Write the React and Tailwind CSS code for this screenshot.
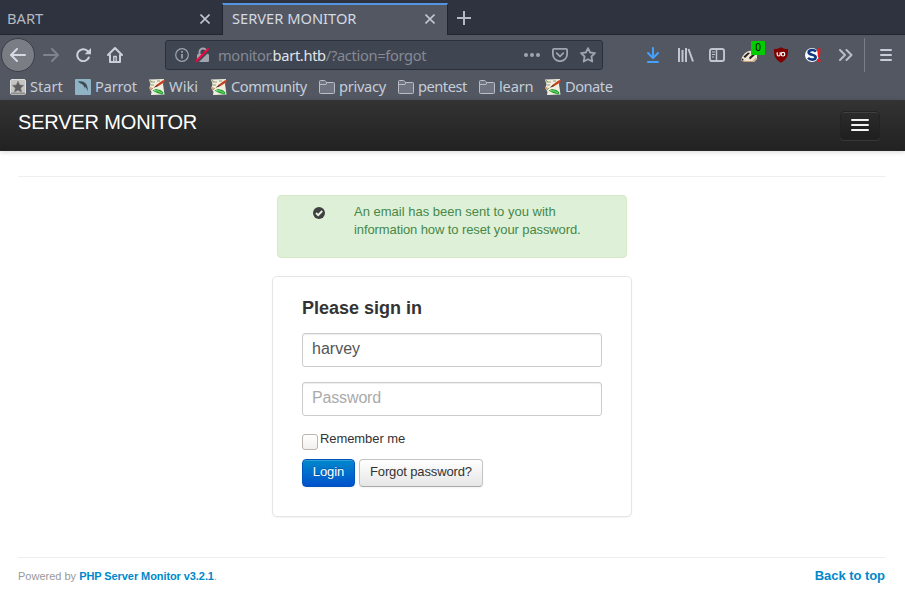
import React from "react";

const StartIcon = () => (
  <svg width="16" height="16" viewBox="0 0 16 16">
    <rect x=".5" y=".5" width="15" height="15" rx="1.5" fill="#c4c4c2" stroke="#dededc" />
    <rect x="1" y="13.5" width="14" height="2" fill="#8c8c8a" />
    <path d="M8 2.2l1.7 3.7 4 .5-3 2.7.8 4L8 11.2l-3.5 1.9.8-4-3-2.7 4-.5z" fill="#5c5c5c" stroke="#777" strokeWidth=".6" />
  </svg>
);

const ParrotIcon = () => (
  <svg width="16" height="16" viewBox="0 0 16 16">
    <rect width="16" height="16" rx="1" fill="#8fb3c4" />
    <path d="M3 2.500c3-.8 6-.2 8 2.200c1.600 2 1.600 4.800 2 7.300c-1.300-1.500-1.800-3.400-2.900-4.800c.2.9.1 1.800-.2 2.600c-.4-2-1.200-3.400-2.700-4.500c-1.300-.8-2.700-1.200-4.200-2.800z" fill="#3c4a56" />
  </svg>
);

const NoteIcon = () => (
  <svg width="16" height="16" viewBox="0 0 16 16">
    <path d="M0 .5L15 0l-1 5 1.500 10.500L2 16l.5-3L.5 9l1-3.500z" fill="#f1eee0" />
    <path d="M1 3h5M2 6h3M1 1l2 2M2 11l2-2M8 2h3" stroke="#8f9f72" strokeWidth="1" />
    <path d="M0 7.500l3.500 1.500L1 11z" fill="#d99b6c" />
    <path d="M5 8.500l3-3 5.500-4 2.500-.5-1 2.500-5.500 3.500z" fill="#c5401f" />
    <path d="M4.500 9l3.500-3 1 1z" fill="#49302a" />
    <path d="M3.500 11.500l3.500-1.500 4.500 1 3 2.500-1 2-5.500-1.500z" fill="#20a02d" />
    <path d="M5 11.500l4 .5 4 2" stroke="#8be28a" strokeWidth=".9" fill="none" />
  </svg>
);

const FolderIcon = () => (
  <svg width="16" height="16" viewBox="0 0 16 16" fill="#6f7480" stroke="#b9bdc6" strokeLinejoin="round">
    <path d="M.5 13.500v-11q0-1 1-1h4q.8 0 1.200.8l.6 1.200h7.200q1 0 1 1v9q0 1-1 1h-13q-1 0-1-1z" />
    <path d="M1 5.500h6l1-2" fill="none" />
  </svg>
);

const bookmarks = [
  { label: "Start", Icon: StartIcon, box: "w-[65px]", text: "" },
  { label: "Parrot", Icon: ParrotIcon, box: "w-[74px]", text: "tracking-[-0.2px]" },
  { label: "Wiki", Icon: NoteIcon, box: "w-[62px]", text: "" },
  { label: "Community", Icon: NoteIcon, box: "w-[108px]", text: "tracking-[-0.5px]" },
  { label: "privacy", Icon: FolderIcon, box: "w-[79px]", text: "tracking-[-0.3px]" },
  { label: "pentest", Icon: FolderIcon, box: "w-[81px]", text: "tracking-[-0.5px]" },
  { label: "learn", Icon: FolderIcon, box: "w-[66px]", text: "tracking-[-0.2px]" },
  { label: "Donate", Icon: NoteIcon, box: "w-[80px]", text: "tracking-[-0.5px]" },
];

const Cross = () => (
  <svg width="10" height="10" viewBox="0 0 10 10" stroke="#c0c5cf" strokeWidth="1.6">
    <path d="M.5.500l9 9M9.500.500l-9 9" />
  </svg>
);

function TabBar() {
  return (
    <div className="flex h-[35px] border-b border-[#22252f] bg-[#2f333f] text-[14.667px] leading-[20px]">
      <div className="flex w-[222px] items-center pt-[3px] pl-[7px] text-[#b4b9c3]">
        <span className="w-[193px] pb-[2px]">BART</span>
        <Cross />
      </div>
      <div className="mt-[3px] flex h-[32px] w-[226px] items-center border-x border-t-2 border-x-[#22252f] border-t-[#5294e2] bg-[#535762] pb-[2px] pl-[9px] text-[#d3dae3]">
        <span className="w-[193px] pb-[2px] whitespace-nowrap">SERVER MONITOR</span>
        <Cross />
      </div>
      <svg className="mt-[11px] ml-[9px]" width="14" height="14" viewBox="0 0 14 14" stroke="#b4b9c3" strokeWidth="2">
        <path d="M7 0v14M0 7h14" />
      </svg>
    </div>
  );
}

function UrlBar() {
  return (
    <div className="ml-[42px] flex h-[30px] w-[438px] items-center rounded-[3px] border border-[#2c303b] bg-[#404552] pl-[9px]">
      <svg width="14" height="14" viewBox="0 0 14 14" fill="none" stroke="#a0a5af">
        <circle cx="7" cy="7" r="6.300" strokeWidth="1.200" />
        <path d="M7 6v4.500M7 3v1.700" strokeWidth="1.700" />
      </svg>
      <svg className="ml-[6px]" width="15" height="16" viewBox="0 0 15 16" fill="none">
        <path d="M4.500 8V5a3.500 3.500 0 0 1 7 0v3" stroke="#a0a5af" strokeWidth="1.900" />
        <rect x="2" y="7" width="12" height="8" rx="1.200" fill="#a0a5af" />
        <path d="M2 15.500L15 2.500" stroke="#404552" strokeWidth="2" />
        <path d="M.8 14.500L13.600 1.500" stroke="#f5053c" strokeWidth="1.900" />
      </svg>
      <span className="ml-[8px] w-[306px] text-[14.667px] leading-[20px] tracking-[-0.33px] whitespace-nowrap text-[#858a95]">
        monitor.<span className="text-[#e1e5eb]">bart.htb</span>/?action=forgot
      </span>
      <svg width="16" height="4" viewBox="0 0 16 4" fill="#a0a5af">
        <circle cx="2" cy="2" r="2" /><circle cx="8" cy="2" r="2" /><circle cx="14" cy="2" r="2" />
      </svg>
      <svg className="ml-[12px]" width="16" height="14" viewBox="0 0 16 14" fill="none" stroke="#a0a5af" strokeWidth="1.800" strokeLinecap="round" strokeLinejoin="round">
        <path d="M2 .9h12q1.100 0 1.100 1.100v4.200a7.100 7 0 0 1-14.200 0V2q0-1.100 1.100-1.100z" />
        <path d="M4.700 5.200L8 8.300l3.300-3.100" />
      </svg>
      <svg className="ml-[12px]" width="16" height="16" viewBox="0 0 16 16" fill="none" stroke="#a0a5af" strokeWidth="1.800" strokeLinejoin="round">
        <path d="M8 1.100l2.100 4.400 4.900.7-3.600 3.300.9 5L8 12.200l-4.300 2.300.9-5L1 6.200l4.900-.7z" />
      </svg>
    </div>
  );
}

function Toolbar() {
  return (
    <div className="flex h-[40px] items-center pl-px">
      <div className="flex h-[34px] w-[34px] items-center justify-center rounded-full border border-[#3b3e48] bg-[#7b7d84]">
        <svg width="16" height="14" viewBox="0 0 16 14" fill="none" stroke="#d3dae3" strokeWidth="2" strokeLinecap="round" strokeLinejoin="round">
          <path d="M15 7H1.500M7 1L1 7l6 6" />
        </svg>
      </div>
      <svg className="ml-[8px]" width="16" height="14" viewBox="0 0 16 14" fill="none" stroke="#7e838e" strokeWidth="2" strokeLinecap="round" strokeLinejoin="round">
        <path d="M1 7h13.500M9 1l6 6-6 6" />
      </svg>
      <svg className="ml-[17px]" width="15" height="14" viewBox="0 0 15 14" fill="none" stroke="#cbd0da" strokeWidth="2" strokeLinecap="round">
        <path d="M12.800 9.500A6 6 0 1 1 11.300 2.700l1.700 1.700" />
        <path d="M15 0v6.200H8.700z" fill="#cbd0da" stroke="none" />
      </svg>
      <svg className="ml-[16px]" width="16" height="16" viewBox="0 0 16 16" fill="none" stroke="#cbd0da" strokeWidth="2" strokeLinecap="round" strokeLinejoin="round">
        <path d="M1 8l7-7 7 7M3 8v7h10V8" />
        <path d="M6.800 14V9.500h2.400V14" strokeWidth="1.400" />
      </svg>
      <UrlBar />
      <svg className="ml-[43px]" width="14" height="16" viewBox="0 0 14 16" fill="none" stroke="#45a1ff" strokeWidth="2" strokeLinejoin="round">
        <path d="M7 1v9.500M2 6l5 5 5-5M2 15h10" strokeLinecap="round" />
      </svg>
      <svg className="ml-[18px]" width="16" height="14" viewBox="0 0 16 14" stroke="#c0c5cf" strokeWidth="2">
        <path d="M1 0v14M4.500 2v12M8 0v14M10.500 1l4.500 12.500" />
      </svg>
      <svg className="ml-[15px]" width="16" height="14" viewBox="0 0 16 14" fill="none" stroke="#c0c5cf" strokeWidth="1.900">
        <rect x=".95" y=".95" width="14.100" height="12.100" rx="2" />
        <path d="M7.500 1v12" strokeWidth="1.500" /><path d="M3 4h3M3 6.500h3M3 9h2" strokeWidth="1" />
      </svg>
      <div className="relative ml-[16px] h-[16px] w-[16px]">
        <svg width="16" height="16" viewBox="0 0 16 16">
          <path d="M0 13c1-4 4-8 8-9l5-.5 3 4.500v4l-3 3H4z" fill="#eee5d6" />
          <path d="M2.500 9.500l4.500-4 2 .5-5 5zM8 10.500l4-3.500 2 1-5 4.500z" fill="#262320" />
          <path d="M0 13l4 1.500h8l3.500-3.500" stroke="#c89f71" strokeWidth="1.200" fill="none" />
          <circle cx="1.500" cy="12.500" r="1" fill="#332821" />
        </svg>
        <span className="absolute top-[-6px] left-[10px] h-[14px] w-[14px] rounded-[1px] bg-[#00cc00] text-center text-[10px] leading-[13px] text-black">0</span>
      </div>
      <svg className="ml-[16px]" width="16" height="16" viewBox="0 0 16 16">
        <path d="M8 .3C6 1.700 3.500 2 1 2c0 6 0 9.500 7 13.700C15 11.500 15 8 15 2c-2.500 0-5-.3-7-1.700z" fill="#800000" />
        <path d="M4.200 5.300v2.200q0 1.500 1.500 1.500t1.500-1.500V5.300" fill="none" stroke="#fff" strokeWidth="1.200" />
        <circle cx="10" cy="7.200" r="1.800" fill="none" stroke="#fff" strokeWidth="1.200" />
      </svg>
      <svg className="ml-[16px]" width="16" height="16" viewBox="0 0 16 16">
        <circle cx="7" cy="8" r="7" fill="#fff" />
        <path d="M11 4.700C9 2.200 3.500 2.500 3.700 5.500 4 8.500 10.600 7 10.600 10.300c0 3-5.600 2.900-7.600.6" fill="none" stroke="#123a82" strokeWidth="2.700" />
        <path d="M12.200 1.500h3.300l-.6 9h-2z" fill="#f21818" /><rect x="12.400" y="12" width="3" height="3" fill="#f21818" />
      </svg>
      <svg className="ml-[18px]" width="14" height="12" viewBox="0 0 14 12" fill="none" stroke="#b9bdca" strokeWidth="2" strokeLinecap="round" strokeLinejoin="round">
        <path d="M1 1l5 5-5 5M7.500 1l5 5-5 5" />
      </svg>
      <div className="ml-[11px] h-[34px] w-px bg-[#7b7e88]" />
      <div className="ml-[15px] flex w-[12px] flex-col gap-[3px]">
        <i className="h-[2px] rounded-sm bg-[#c8cbd8]" /><i className="h-[2px] rounded-sm bg-[#c8cbd8]" /><i className="h-[2px] rounded-sm bg-[#c8cbd8]" />
      </div>
    </div>
  );
}

function Browser() {
  return (
    <div className="font-['Noto_Sans',sans-serif]">
      <TabBar />
      <div className="h-[65px] bg-[#535762]">
        <Toolbar />
        <div className="flex h-[25px] items-center pb-px pl-[10px]">
          {bookmarks.map(({ label, Icon, box, text }) => (
            <div key={label} className={`flex items-center gap-[4px] ${box}`}>
              <Icon />
              <span className={`pb-[2px] text-[14.667px] leading-[20px] whitespace-nowrap text-[#c5cdd9] ${text}`}>{label}</span>
            </div>
          ))}
        </div>
      </div>
    </div>
  );
}

function SiteHeader() {
  return (
    <div className="flex h-[51px] justify-between border-b border-[#252525] bg-linear-to-b from-[#333] to-[#222] pr-[25px] pl-[18px] shadow-[0_1px_5px_rgba(0,0,0,0.17)]">
      <div className="mt-[12px] text-[20px] leading-[20px] tracking-[-0.17px] text-white">SERVER MONITOR</div>
      <div className="mt-[11px] flex h-[29px] w-[40px] flex-col items-center gap-[3px] rounded-[4px] border border-[#222] bg-linear-to-b from-[#2b2b2b] to-[#1f1f1f] pt-[7px] shadow-[inset_0_1px_0_rgba(255,255,255,0.1),0_1px_0_rgba(255,255,255,0.075)]">
        <i className="h-[2px] w-[18px] rounded-[1px] bg-[#f5f5f5]" />
        <i className="h-[2px] w-[18px] rounded-[1px] bg-[#f5f5f5]" />
        <i className="h-[2px] w-[18px] rounded-[1px] bg-[#f5f5f5]" />
      </div>
    </div>
  );
}

function Notice() {
  return (
    <div className="mx-auto mt-[18px] flex h-[63px] w-[350px] rounded-[4px] border border-[#d6e9c6] bg-[#dff0d8] pt-[7px] pl-[35px] text-[13px] leading-[18px] text-[#468847]">
      <svg className="mt-[4px] mr-[29px] shrink-0" width="12" height="12" viewBox="0 0 12 12">
        <circle cx="6" cy="6" r="6" fill="#404040" />
        <path d="M3 6l2.200 2.200L9.200 4" fill="none" stroke="#e7f3e2" strokeWidth="1.900" />
      </svg>
      <p className="w-[245px]">An email has been sent to you with<br /><span className="tracking-[-0.1px]">information how to reset your password.</span></p>
    </div>
  );
}

const field = "h-[34px] w-[300px] rounded-[3px] border border-[#ccc] pl-[9px] text-[16px] leading-[30px] shadow-[inset_0_1px_1px_rgba(0,0,0,0.075)]";
const button = "h-[28px] rounded-[4px] border text-center text-[13px] leading-[24px] shadow-[inset_0_1px_0_rgba(255,255,255,0.2),0_1px_2px_rgba(0,0,0,0.05)]";

function SignIn() {
  return (
    <div className="mx-auto mt-[18px] h-[241px] w-[360px] rounded-[5px] border border-[#e5e5e5] bg-white px-[29px] pt-[19px] text-[#333] shadow-[0_1px_2px_rgba(0,0,0,0.05)]">
      <h1 className="text-[18px] leading-[24px] font-bold">Please sign in</h1>
      <div className={`mt-[13px] text-[#555] ${field}`}>harvey</div>
      <div className={`mt-[15px] tracking-[-0.15px] text-[#aaa] ${field}`}>Password</div>
      <div className="mt-[15px] flex h-[19px] gap-[2px] text-[13px] leading-[16px] tracking-[-0.08px]">
        <div className="mt-[3px] h-[16px] w-[16px] rounded-[3px] border border-[#bbb4ae] bg-linear-to-b from-white to-[#f1f0ee]" />
        Remember me
      </div>
      <div className="mt-[9px] flex gap-[4px]">
        <div className={`w-[53px] tracking-[-0.1px] border-[#0055bb] bg-linear-to-b from-[#0088cc] to-[#0050cc] text-white [text-shadow:0_-1px_0_rgba(0,0,0,0.25)] ${button}`}>Login</div>
        <div className={`w-[124px] tracking-[-0.13px] border-[#c4c4c4] border-b-[#aaa] bg-linear-to-b from-white to-[#e6e6e6] ${button}`}>Forgot password?</div>
      </div>
    </div>
  );
}

export default function App() {
  return (
    <div className="h-[607px] w-[905px] overflow-hidden bg-white">
      <Browser />
      <div className="font-['Liberation_Sans',sans-serif]">
        <SiteHeader />
        <div className="pt-[25px] pr-[20px] pl-[18px]">
          <div className="border-t border-[#eee]" />
          <div className="pl-px">
            <Notice />
            <SignIn />
          </div>
          <div className="mt-[40px] flex justify-between border-t border-[#eee] pt-[9px] leading-[18px]">
            <div className="text-[11px] text-[#999]">Powered by <b className="tracking-[-0.08px] text-[#0088cc]">PHP Server Monitor v3.2.1</b>.</div>
            <b className="text-[13px] tracking-[-0.05px] text-[#0088cc]">Back to top</b>
          </div>
        </div>
      </div>
    </div>
  );
}
